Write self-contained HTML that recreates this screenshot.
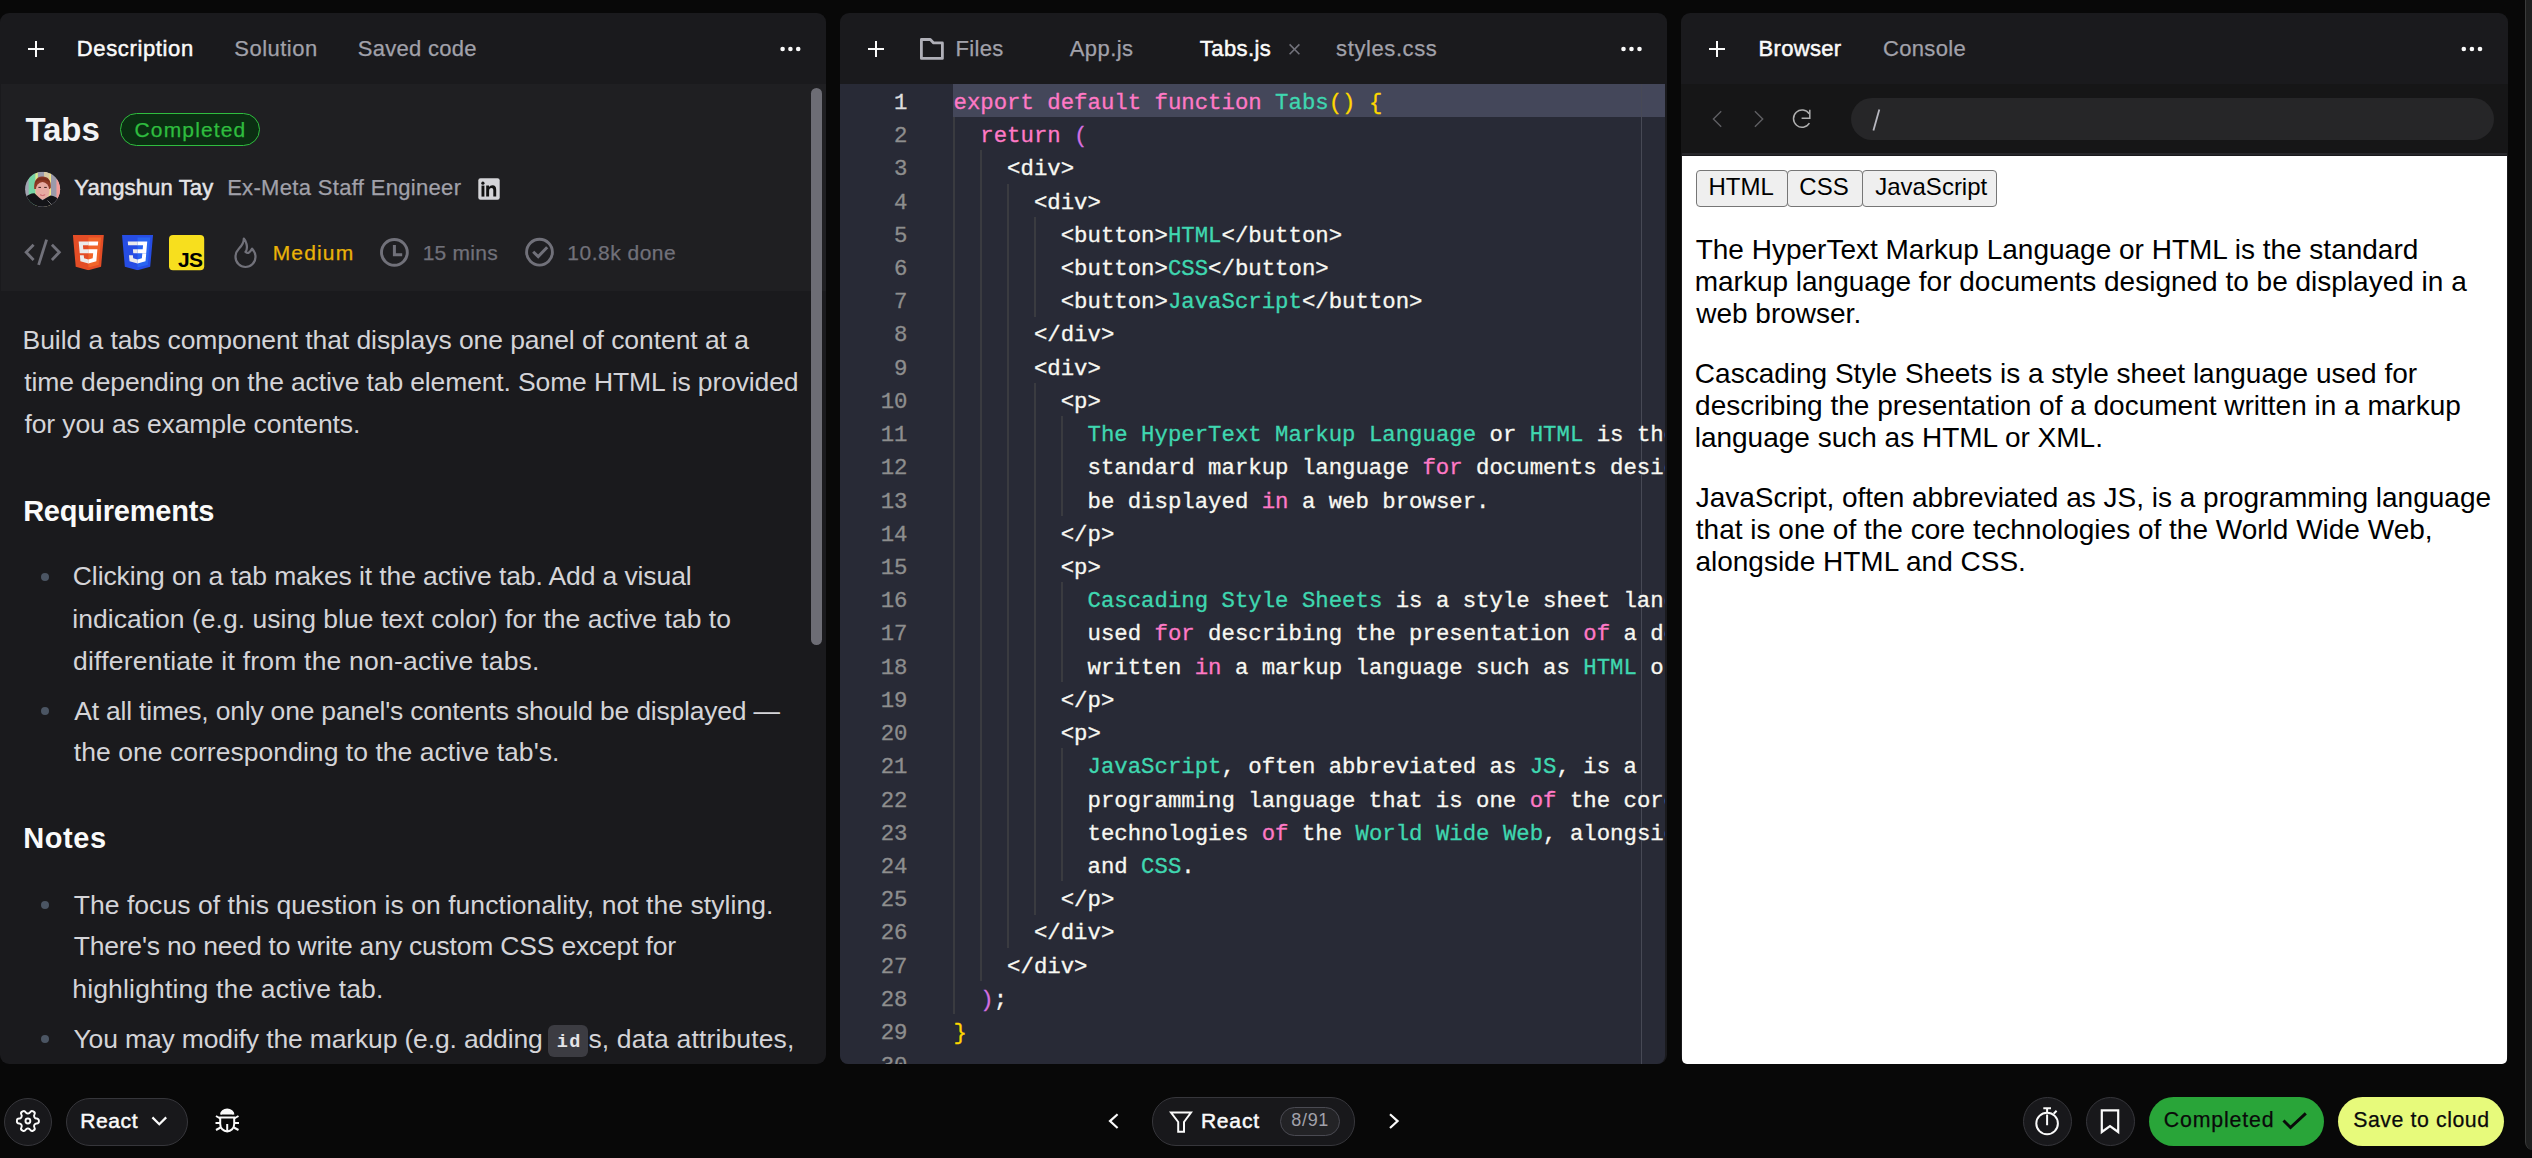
<!DOCTYPE html>
<html><head><meta charset="utf-8"><style>
html,body{margin:0;padding:0;}
body{width:2532px;height:1158px;overflow:hidden;background:#080808;position:relative;font-family:"Liberation Sans",sans-serif;}
.p{position:absolute;top:13px;height:1051px;border-radius:9px;overflow:hidden;background:#1a1a1d;}
.t{position:absolute;white-space:pre;line-height:1;font-family:"Liberation Sans",sans-serif;}
.c{position:absolute;white-space:pre;line-height:1;font-family:"Liberation Mono",monospace;font-size:22.333px;-webkit-text-stroke:0.3px currentColor;}
.a{position:absolute;}
</style></head><body>
<div class="p" style="left:0;width:826px;"></div>
<div class="a" style="left:1px;top:84px;width:825px;height:207px;background:#1f1f22"></div>
<div class="a" style="left:811px;top:88px;width:11px;height:557px;border-radius:6px;background:#6d6d75"></div>
<div class="a" style="left:548px;top:1025px;width:40px;height:32px;border-radius:6px;background:#3c3c42"></div>
<div class="p" style="left:840px;width:827px;"></div>
<div class="a" style="left:840px;top:84px;width:825px;height:980px;background:#282a36;border-radius:0 0 8px 8px;overflow:hidden">
</div>
<div class="a" style="left:0;top:0;width:2532px;height:1158px;overflow:hidden;clip-path:inset(84px 867px 94px 840px round 0 0 8px 8px)">
<div style="position:absolute;left:953px;top:84px;width:712px;height:33.22px;background:#44475a"></div>
<div style="position:absolute;left:953px;top:117.2px;width:2px;height:896.9px;background:#3a3b40"></div>
<div style="position:absolute;left:980px;top:150.4px;width:2px;height:830.5px;background:#3a3b40"></div>
<div style="position:absolute;left:1007px;top:183.7px;width:2px;height:764.1px;background:#3a3b40"></div>
<div style="position:absolute;left:1034px;top:216.9px;width:2px;height:99.7px;background:#3a3b40"></div>
<div style="position:absolute;left:1034px;top:383.0px;width:2px;height:531.5px;background:#3a3b40"></div>
<div style="position:absolute;left:1061px;top:416.2px;width:2px;height:99.7px;background:#3a3b40"></div>
<div style="position:absolute;left:1061px;top:582.3px;width:2px;height:99.7px;background:#3a3b40"></div>
<div style="position:absolute;left:1061px;top:748.4px;width:2px;height:132.9px;background:#3a3b40"></div>
<div style="position:absolute;left:1641px;top:84px;width:1px;height:980px;background:#474955"></div>
<div class="c" style="top:91.88px;left:840px;width:67.5px;text-align:right;color:#dedede">1</div>
<div class="c" style="top:91.88px;left:953.5px"><span style="color:#ff79c6">export default function </span><span style="color:#3fd7b0">Tabs</span><span style="color:#ffd700">() {</span></div>
<div class="c" style="top:125.10px;left:840px;width:67.5px;text-align:right;color:#8e8e8e">2</div>
<div class="c" style="top:125.10px;left:953.5px"><span style="color:#f8f8f2">  </span><span style="color:#ff79c6">return </span><span style="color:#d56fe0">(</span></div>
<div class="c" style="top:158.32px;left:840px;width:67.5px;text-align:right;color:#8e8e8e">3</div>
<div class="c" style="top:158.32px;left:953.5px"><span style="color:#f8f8f2">    &lt;div&gt;</span></div>
<div class="c" style="top:191.54px;left:840px;width:67.5px;text-align:right;color:#8e8e8e">4</div>
<div class="c" style="top:191.54px;left:953.5px"><span style="color:#f8f8f2">      &lt;div&gt;</span></div>
<div class="c" style="top:224.76px;left:840px;width:67.5px;text-align:right;color:#8e8e8e">5</div>
<div class="c" style="top:224.76px;left:953.5px"><span style="color:#f8f8f2">        &lt;button&gt;</span><span style="color:#3fd7b0">HTML</span><span style="color:#f8f8f2">&lt;/button&gt;</span></div>
<div class="c" style="top:257.98px;left:840px;width:67.5px;text-align:right;color:#8e8e8e">6</div>
<div class="c" style="top:257.98px;left:953.5px"><span style="color:#f8f8f2">        &lt;button&gt;</span><span style="color:#3fd7b0">CSS</span><span style="color:#f8f8f2">&lt;/button&gt;</span></div>
<div class="c" style="top:291.20px;left:840px;width:67.5px;text-align:right;color:#8e8e8e">7</div>
<div class="c" style="top:291.20px;left:953.5px"><span style="color:#f8f8f2">        &lt;button&gt;</span><span style="color:#3fd7b0">JavaScript</span><span style="color:#f8f8f2">&lt;/button&gt;</span></div>
<div class="c" style="top:324.42px;left:840px;width:67.5px;text-align:right;color:#8e8e8e">8</div>
<div class="c" style="top:324.42px;left:953.5px"><span style="color:#f8f8f2">      &lt;/div&gt;</span></div>
<div class="c" style="top:357.64px;left:840px;width:67.5px;text-align:right;color:#8e8e8e">9</div>
<div class="c" style="top:357.64px;left:953.5px"><span style="color:#f8f8f2">      &lt;div&gt;</span></div>
<div class="c" style="top:390.86px;left:840px;width:67.5px;text-align:right;color:#8e8e8e">10</div>
<div class="c" style="top:390.86px;left:953.5px"><span style="color:#f8f8f2">        &lt;p&gt;</span></div>
<div class="c" style="top:424.08px;left:840px;width:67.5px;text-align:right;color:#8e8e8e">11</div>
<div class="c" style="top:424.08px;left:953.5px"><span style="color:#f8f8f2">          </span><span style="color:#3fd7b0">The HyperText Markup Language</span><span style="color:#f8f8f2"> or </span><span style="color:#3fd7b0">HTML</span><span style="color:#f8f8f2"> is the</span></div>
<div class="c" style="top:457.30px;left:840px;width:67.5px;text-align:right;color:#8e8e8e">12</div>
<div class="c" style="top:457.30px;left:953.5px"><span style="color:#f8f8f2">          standard markup language </span><span style="color:#ff79c6">for</span><span style="color:#f8f8f2"> documents designed to</span></div>
<div class="c" style="top:490.52px;left:840px;width:67.5px;text-align:right;color:#8e8e8e">13</div>
<div class="c" style="top:490.52px;left:953.5px"><span style="color:#f8f8f2">          be displayed </span><span style="color:#ff79c6">in</span><span style="color:#f8f8f2"> a web browser.</span></div>
<div class="c" style="top:523.74px;left:840px;width:67.5px;text-align:right;color:#8e8e8e">14</div>
<div class="c" style="top:523.74px;left:953.5px"><span style="color:#f8f8f2">        &lt;/p&gt;</span></div>
<div class="c" style="top:556.96px;left:840px;width:67.5px;text-align:right;color:#8e8e8e">15</div>
<div class="c" style="top:556.96px;left:953.5px"><span style="color:#f8f8f2">        &lt;p&gt;</span></div>
<div class="c" style="top:590.18px;left:840px;width:67.5px;text-align:right;color:#8e8e8e">16</div>
<div class="c" style="top:590.18px;left:953.5px"><span style="color:#f8f8f2">          </span><span style="color:#3fd7b0">Cascading Style Sheets</span><span style="color:#f8f8f2"> is a style sheet language</span></div>
<div class="c" style="top:623.40px;left:840px;width:67.5px;text-align:right;color:#8e8e8e">17</div>
<div class="c" style="top:623.40px;left:953.5px"><span style="color:#f8f8f2">          used </span><span style="color:#ff79c6">for</span><span style="color:#f8f8f2"> describing the presentation </span><span style="color:#ff79c6">of</span><span style="color:#f8f8f2"> a document</span></div>
<div class="c" style="top:656.62px;left:840px;width:67.5px;text-align:right;color:#8e8e8e">18</div>
<div class="c" style="top:656.62px;left:953.5px"><span style="color:#f8f8f2">          written </span><span style="color:#ff79c6">in</span><span style="color:#f8f8f2"> a markup language such as </span><span style="color:#3fd7b0">HTML</span><span style="color:#f8f8f2"> or XML.</span></div>
<div class="c" style="top:689.84px;left:840px;width:67.5px;text-align:right;color:#8e8e8e">19</div>
<div class="c" style="top:689.84px;left:953.5px"><span style="color:#f8f8f2">        &lt;/p&gt;</span></div>
<div class="c" style="top:723.06px;left:840px;width:67.5px;text-align:right;color:#8e8e8e">20</div>
<div class="c" style="top:723.06px;left:953.5px"><span style="color:#f8f8f2">        &lt;p&gt;</span></div>
<div class="c" style="top:756.28px;left:840px;width:67.5px;text-align:right;color:#8e8e8e">21</div>
<div class="c" style="top:756.28px;left:953.5px"><span style="color:#f8f8f2">          </span><span style="color:#3fd7b0">JavaScript</span><span style="color:#f8f8f2">, often abbreviated as </span><span style="color:#3fd7b0">JS</span><span style="color:#f8f8f2">, is a</span></div>
<div class="c" style="top:789.50px;left:840px;width:67.5px;text-align:right;color:#8e8e8e">22</div>
<div class="c" style="top:789.50px;left:953.5px"><span style="color:#f8f8f2">          programming language that is one </span><span style="color:#ff79c6">of</span><span style="color:#f8f8f2"> the core</span></div>
<div class="c" style="top:822.72px;left:840px;width:67.5px;text-align:right;color:#8e8e8e">23</div>
<div class="c" style="top:822.72px;left:953.5px"><span style="color:#f8f8f2">          technologies </span><span style="color:#ff79c6">of</span><span style="color:#f8f8f2"> the </span><span style="color:#3fd7b0">World Wide Web</span><span style="color:#f8f8f2">, alongside HTML</span></div>
<div class="c" style="top:855.94px;left:840px;width:67.5px;text-align:right;color:#8e8e8e">24</div>
<div class="c" style="top:855.94px;left:953.5px"><span style="color:#f8f8f2">          and </span><span style="color:#3fd7b0">CSS</span><span style="color:#f8f8f2">.</span></div>
<div class="c" style="top:889.16px;left:840px;width:67.5px;text-align:right;color:#8e8e8e">25</div>
<div class="c" style="top:889.16px;left:953.5px"><span style="color:#f8f8f2">        &lt;/p&gt;</span></div>
<div class="c" style="top:922.38px;left:840px;width:67.5px;text-align:right;color:#8e8e8e">26</div>
<div class="c" style="top:922.38px;left:953.5px"><span style="color:#f8f8f2">      &lt;/div&gt;</span></div>
<div class="c" style="top:955.60px;left:840px;width:67.5px;text-align:right;color:#8e8e8e">27</div>
<div class="c" style="top:955.60px;left:953.5px"><span style="color:#f8f8f2">    &lt;/div&gt;</span></div>
<div class="c" style="top:988.82px;left:840px;width:67.5px;text-align:right;color:#8e8e8e">28</div>
<div class="c" style="top:988.82px;left:953.5px"><span style="color:#f8f8f2">  </span><span style="color:#d56fe0">)</span><span style="color:#f8f8f2">;</span></div>
<div class="c" style="top:1022.04px;left:840px;width:67.5px;text-align:right;color:#8e8e8e">29</div>
<div class="c" style="top:1022.04px;left:953.5px"><span style="color:#ffd700">}</span></div>
<div class="c" style="top:1055.26px;left:840px;width:67.5px;text-align:right;color:#8e8e8e">30</div>
<div class="c" style="top:1055.26px;left:953.5px"><span style="color:#f8f8f2"></span></div>
</div>
<div class="p" style="left:1681px;width:827px;"></div>
<div class="a" style="left:1681px;top:84px;width:827px;height:71px;background:#161617"></div>
<div class="a" style="left:1682px;top:153px;width:825px;height:2px;background:#26262a"></div>
<div class="a" style="left:1850.5px;top:98px;width:643px;height:41.5px;border-radius:21px;background:#262628"></div>
<div class="a" style="left:1682px;top:155.5px;width:825px;height:908.5px;background:#fff;border-radius:0 0 5px 5px"></div>
<div class="a" style="left:1696px;top:170px;width:91.5px;height:37px;box-sizing:border-box;border:1.5px solid #767676;border-radius:4px;background:#efefef"></div>
<div class="a" style="left:1787px;top:170px;width:75.5px;height:37px;box-sizing:border-box;border:1.5px solid #767676;border-radius:4px;background:#efefef"></div>
<div class="a" style="left:1862px;top:170px;width:135px;height:37px;box-sizing:border-box;border:1.5px solid #767676;border-radius:4px;background:#efefef"></div>
<div class="a" style="left:2525px;top:0;width:7px;height:1150px;background:#1f2020;border-left:1px solid #3a3b3b;border-bottom-left-radius:8px"></div>
<div class="a" style="left:120px;top:113px;width:140px;height:33px;box-sizing:border-box;border:1.5px solid #2fbd3f;border-radius:17px;background:#0b2e12"></div>
<div class="a" style="left:66px;top:1097.5px;width:121.8px;height:48px;box-sizing:border-box;border:1.5px solid #36363b;border-radius:24px;background:#18181b"></div>
<div class="a" style="left:3.5px;top:1097.5px;width:48px;height:48px;box-sizing:border-box;border:1.5px solid #36363b;border-radius:24px;background:#18181b"></div>
<div class="a" style="left:1152px;top:1097px;width:202.6px;height:48.5px;box-sizing:border-box;border:1.5px solid #36363b;border-radius:24px;background:#18181b"></div>
<div class="a" style="left:1280px;top:1106.5px;width:60px;height:29.5px;box-sizing:border-box;border:1.5px solid #4a4a52;border-radius:15px;background:#232326"></div>
<div class="a" style="left:2023px;top:1097px;width:48.8px;height:48.5px;box-sizing:border-box;border:1.5px solid #36363b;border-radius:25px;background:#18181b"></div>
<div class="a" style="left:2086px;top:1097px;width:48.8px;height:48.5px;box-sizing:border-box;border:1.5px solid #36363b;border-radius:25px;background:#18181b"></div>
<div class="a" style="left:2149px;top:1097px;width:174.7px;height:48.5px;border-radius:25px;background:#29a539"></div>
<div class="a" style="left:2338px;top:1097px;width:166px;height:48.5px;border-radius:25px;background:#e7fa7b"></div>
<svg class="a" style="left:0;top:0" width="2532" height="1158" viewBox="0 0 2532 1158">
<g stroke="#fafafa" stroke-width="2" fill="none">
<path d="M28 49H44M36 41V57"/>
<path d="M868 49H884M876 41V57"/>
<path d="M1709 49H1725M1717 41V57"/>
</g>
<g fill="#fafafa">
<circle cx="782.6" cy="49" r="2.3"/><circle cx="790.4" cy="49" r="2.3"/><circle cx="798.2" cy="49" r="2.3"/>
<circle cx="1623.5" cy="49" r="2.3"/><circle cx="1631.5" cy="49" r="2.3"/><circle cx="1639.5" cy="49" r="2.3"/>
<circle cx="2463.8" cy="49" r="2.3"/><circle cx="2471.9" cy="49" r="2.3"/><circle cx="2480" cy="49" r="2.3"/>
</g>
<!-- folder -->
<path d="M921.4 39.5H930.3L933.6 42.9H942.4V58.4H921.4Z" stroke="#b0b0b8" stroke-width="2.8" fill="none" stroke-linejoin="round"/>
<!-- close x -->
<path d="M1289.6 44.4L1299.4 54.2M1299.4 44.4L1289.6 54.2" stroke="#71717a" stroke-width="1.6" fill="none"/>
<!-- code icon -->
<g stroke="#71717a" stroke-width="2.8" fill="none" stroke-linejoin="miter">
<path d="M33.6 244.8L26.2 252.3L33.6 259.9"/>
<path d="M51.9 244.8L59.3 252.3L51.9 259.9"/>
<path d="M46.6 239.6L38.6 264.8"/>
</g>
<!-- html5 -->
<svg x="72.9" y="235" width="31" height="35.2" viewBox="30 0 451 512" preserveAspectRatio="none">
<path fill="#E44D26" d="M71,460 L30,0 481,0 440,460 255,512"/>
<path fill="#F16529" d="M256,472 L405,431 440,37 256,37"/>
<path fill="#EBEBEB" d="M256,208 L181,208 176,150 256,150 256,94 255,94 114,94 115,109 129,265 256,265zM256,355 L255,355 192,338 188,293 158,293 132,293 139,382 255,414 256,414z"/>
<path fill="#FFF" d="M255,208 L255,265 325,265 318,338 255,355 255,414 371,382 372,372 385,223 387,208 371,208zM255,94 L255,94 255,150 255,151 392,151 392,151 393,151 394,138 397,109 398,94z"/>
</svg>
<!-- css3 -->
<svg x="122" y="235" width="31" height="35.2" viewBox="30 0 451 512" preserveAspectRatio="none">
<path fill="#264DE4" d="M71.357 460.819L30.272 0h451.456l-41.129 460.746L255.724 512z"/>
<path fill="#2965F1" d="M256 472.818l149.324-41.397L440.45 37.319H256z"/>
<path fill="#EBEBEB" d="M256.19 93.76v56.789H118.95l-1.141-12.764-2.59-28.763-1.356-15.262zM256 208.795v56.796h-62.52l-1.138-12.764-2.592-28.768-1.354-15.264zM256.334 355.161l-.248.066-63.332-17.083-4.047-45.361h-57.092l7.966 89.301 116.461 32.353.292-.081z"/>
<path fill="#FFF" d="M256 208.778h75.245l5.174-58.229H256V93.76h141.366l-1.35 15.267-13.881 155.962H256zM326.07 262.093l-6.848 76.142-63.41 17.11v59.061l116.554-32.297.857-9.605 9.891-110.411z"/>
</svg>
<!-- js -->
<rect x="169" y="235" width="35.2" height="35.2" rx="4" fill="#F7DF1E"/>
<text x="178" y="267" font-family="Liberation Sans" font-weight="bold" font-size="21" fill="#000" letter-spacing="-0.6">JS</text>
<!-- flame (tabler) -->
<svg x="225.5" y="232" width="40" height="40" viewBox="0 0 24 24">
<path d="M12 12c2 -2.96 0 -7 -1 -8c0 3.038 -1.773 4.741 -3 6c-1.226 1.26 -2 3.24 -2 5a6 6 0 1 0 12 0c0 -1.532 -1.056 -3.94 -2 -5c-1.786 3 -2.791 3 -4 2z" stroke="#71717a" stroke-width="1.35" fill="none" stroke-linejoin="round" stroke-linecap="round"/>
</svg>
<!-- clock -->
<circle cx="394.4" cy="252.4" r="12.9" stroke="#71717a" stroke-width="2.9" fill="none"/>
<path d="M394.4 244.9V254.8H402.2" stroke="#71717a" stroke-width="3" fill="none"/>
<!-- check circle -->
<circle cx="539.5" cy="252.2" r="12.9" stroke="#71717a" stroke-width="2.9" fill="none"/>
<path d="M533.2 251.7L538.2 256.6L547.2 247.2" stroke="#71717a" stroke-width="3" fill="none"/>
<!-- linkedin -->
<rect x="478.3" y="178.3" width="21.4" height="21.4" rx="2.2" fill="#d4d4d8"/>
<g fill="#111">
<circle cx="482.9" cy="183.2" r="1.6"/>
<rect x="481.5" y="185.6" width="2.9" height="11"/>
<path d="M486.2 185.6H489V187.2C489.7 186 490.9 185.3 492.5 185.3C495.1 185.3 496.2 186.9 496.2 189.8V196.6H493.3V190.6C493.3 189 492.9 188 491.5 188C489.9 188 489.1 189.1 489.1 190.9V196.6H486.2Z"/>
</g>
<!-- avatar -->
<defs><clipPath id="av"><circle cx="42.6" cy="189.3" r="17.5"/></clipPath></defs>
<g clip-path="url(#av)">
<rect x="25" y="171.8" width="36" height="36" fill="#a3a3b2"/>
<rect x="28.7" y="171.8" width="6.7" height="36" fill="#74d3a4"/>
<rect x="35.4" y="171.8" width="2.5" height="36" fill="#d6ee8c"/>
<rect x="37.9" y="171.8" width="6.1" height="36" fill="#9c9cac"/>
<rect x="44" y="171.8" width="5.2" height="36" fill="#d8c9a4"/>
<rect x="49.2" y="171.8" width="1.8" height="36" fill="#f3e38a"/>
<rect x="51" y="171.8" width="5.5" height="36" fill="#9a9aaa"/>
<rect x="56.5" y="171.8" width="4.5" height="36" fill="#f39c98"/>
<path d="M34.2 189C33.6 182 36 176.6 42 176.4C48 176.2 51.3 180 50.8 188L49.5 189H35Z" fill="#8f3a26"/>
<ellipse cx="42.5" cy="190.8" rx="6.9" ry="8.8" fill="#e6aaa2"/>
<path d="M35.4 185.5C35.6 181.5 38 179.8 41.5 180.2C44.5 180.6 47.5 180 49.8 182.5C49.5 180 47 177.6 42.3 177.6C37.5 177.6 35 180.5 35.4 185.5Z" fill="#7a2e1c"/>
<path d="M38.4 187.4H41M44.2 187.4H46.8" stroke="#3a2020" stroke-width="1"/>
<path d="M40 194.8Q42.6 196.2 45.2 194.8" stroke="#c8606a" stroke-width="1" fill="none"/>
<path d="M24 199C27 195 31 193 34.5 193.2L39 197.5L42.5 200.3L46 198L50.5 195.5C54 195.8 58 198 61 201V212H24Z" fill="#141418"/>
<path d="M47.5 200.5L52 205" stroke="#8a8a90" stroke-width="0.8"/>
</g>
<!-- browser toolbar -->
<path d="M1721.2 111.2L1713.4 119L1721.2 126.8" stroke="#5f5f63" stroke-width="1.4" fill="none"/>
<path d="M1754.9 111.2L1762.7 119L1754.9 126.8" stroke="#5f5f63" stroke-width="1.4" fill="none"/>
<path d="M1809.2 113.8A8.6 8.6 0 1 0 1809.4 123.2" stroke="#b0b0b0" stroke-width="1.5" fill="none"/>
<path d="M1809.8 109.8V118.3H1801.6" stroke="#b0b0b0" stroke-width="1.5" fill="none"/>
<path d="M1879.3 109.6L1873.4 130.6" stroke="#b8b8c0" stroke-width="1.8" fill="none"/>
<!-- bottom: gear -->
<svg x="14.7" y="1107.8" width="26.4" height="26.4" viewBox="0 0 24 24">
<g transform="rotate(90 12 12)" stroke="#fafafa" stroke-width="1.75" fill="none" stroke-linejoin="round" stroke-linecap="round">
<path d="M12.22 2h-.44a2 2 0 0 0-2 2v.18a2 2 0 0 1-1 1.73l-.43.25a2 2 0 0 1-2 0l-.15-.08a2 2 0 0 0-2.730.73l-.22.38a2 2 0 0 0 .73 2.73l.15.1a2 2 0 0 1 1 1.72v.51a2 2 0 0 1-1 1.74l-.15.09a2 2 0 0 0-.73 2.730l.22.38a2 2 0 0 0 2.73.73l.15-.08a2 2 0 0 1 2 0l.43.25a2 2 0 0 1 1 1.73V20a2 2 0 0 0 2 2h.44a2 2 0 0 0 2-2v-.18a2 2 0 0 1 1-1.73l.43-.25a2 2 0 0 1 2 0l.15.08a2 2 0 0 0 2.73-.73l.22-.39a2 2 0 0 0-.73-2.73l-.15-.08a2 2 0 0 1-1-1.74v-.5a2 2 0 0 1 1-1.74l.15-.09a2 2 0 0 0 .73-2.73l-.22-.38a2 2 0 0 0-2.73-.73l-.15.08a2 2 0 0 1-2 0l-.43-.25a2 2 0 0 1-1-1.73V4a2 2 0 0 0-2-2z"/>
<circle cx="12" cy="12" r="2.2"/>
</g>
</svg>
<path d="M152.4 1117.4L159.3 1124.3L166.2 1117.4" stroke="#fafafa" stroke-width="2.2" fill="none"/>
<!-- bug -->
<g stroke="#fafafa" stroke-width="2" fill="none">
<path d="M221 1114.5A6.2 5 0 0 1 233.4 1114.5" fill="#fafafa"/>
<path d="M220.2 1117.5H234.2V1124C234.2 1128.2 231 1131.4 227.2 1131.4C223.4 1131.4 220.2 1128.2 220.2 1124Z"/>
<path d="M227.2 1124V1131M215.5 1123H220.2M234.2 1123H239M216 1116L220.2 1118.5M238.5 1116L234.2 1118.5M216 1130L220.6 1127.5M238.5 1130L233.8 1127.5"/>
</g>
<!-- center nav -->
<path d="M1117.6 1114.2L1110 1121.1L1117.6 1128" stroke="#fafafa" stroke-width="2.2" fill="none"/>
<path d="M1390 1114.2L1397.6 1121.1L1390 1128" stroke="#fafafa" stroke-width="2.2" fill="none"/>
<path d="M1171 1112.5H1191L1184 1122V1131.8H1178.2V1122Z" stroke="#fafafa" stroke-width="2" fill="none" stroke-linejoin="miter"/>
<!-- stopwatch -->
<g stroke="#fafafa" stroke-width="2" fill="none">
<circle cx="2047.1" cy="1123.5" r="10.8"/>
<path d="M2043.3 1108.2H2051M2047.1 1108.2V1112.7M2047.1 1114.5V1125.2M2053.7 1113.7L2056.6 1110.8"/>
</g>
<path d="M2101.8 1110.3H2118.2V1132L2110 1126.2L2101.8 1132Z" stroke="#fafafa" stroke-width="2.2" fill="none"/>
<path d="M2283.5 1120.5L2290.5 1127.5L2305.8 1113.4" stroke="#0a0a0a" stroke-width="3" fill="none"/>
<g fill="#4b5563"><circle cx="45" cy="576.9" r="4"/><circle cx="45" cy="711.1" r="4"/><circle cx="45" cy="905.1" r="4"/><circle cx="45" cy="1039.1" r="4"/></g>
</svg>

<div class="t" style="left:76.75px;top:37.68px;font-size:22px;color:#fafafa;letter-spacing:0.636px;-webkit-text-stroke:0.5px currentColor;">Description</div>
<div class="t" style="left:234.36px;top:37.68px;font-size:22px;color:#a1a1aa;letter-spacing:0.469px;-webkit-text-stroke:0.25px currentColor;">Solution</div>
<div class="t" style="left:357.86px;top:37.68px;font-size:22px;color:#a1a1aa;letter-spacing:0.276px;-webkit-text-stroke:0.25px currentColor;">Saved code</div>
<div class="t" style="left:25.42px;top:113.07px;font-size:33px;color:#f4f4f5;font-weight:bold;letter-spacing:-0.082px;">Tabs</div>
<div class="t" style="left:134.56px;top:118.92px;font-size:21px;color:#2fbd3f;letter-spacing:1.143px;-webkit-text-stroke:0.25px currentColor;">Completed</div>
<div class="t" style="left:74.27px;top:177.48px;font-size:22px;color:#e4e4e7;letter-spacing:0.143px;-webkit-text-stroke:0.5px currentColor;">Yangshun Tay</div>
<div class="t" style="left:227.13px;top:177.48px;font-size:22px;color:#a1a1aa;letter-spacing:0.323px;-webkit-text-stroke:0.25px currentColor;">Ex-Meta Staff Engineer</div>
<div class="t" style="left:272.66px;top:241.72px;font-size:21px;color:#eab308;letter-spacing:1.155px;-webkit-text-stroke:0.25px currentColor;">Medium</div>
<div class="t" style="left:422.64px;top:242.02px;font-size:21px;color:#71717a;letter-spacing:0.249px;-webkit-text-stroke:0.25px currentColor;">15 mins</div>
<div class="t" style="left:567.34px;top:242.02px;font-size:21px;color:#71717a;letter-spacing:0.488px;-webkit-text-stroke:0.25px currentColor;">10.8k done</div>
<div class="t" style="left:22.57px;top:326.87px;font-size:26.5px;color:#d4d4d8;letter-spacing:-0.072px;">Build a tabs component that displays one panel of content at a</div>
<div class="t" style="left:24.37px;top:368.57px;font-size:26.5px;color:#d4d4d8;letter-spacing:-0.137px;">time depending on the active tab element. Some HTML is provided</div>
<div class="t" style="left:24.42px;top:410.57px;font-size:26.5px;color:#d4d4d8;letter-spacing:-0.108px;">for you as example contents.</div>
<div class="t" style="left:23.13px;top:497.45px;font-size:29px;color:#fafafa;font-weight:bold;letter-spacing:-0.202px;">Requirements</div>
<div class="t" style="left:72.82px;top:563.37px;font-size:26.5px;color:#d4d4d8;letter-spacing:-0.106px;">Clicking on a tab makes it the active tab. Add a visual</div>
<div class="t" style="left:72.29px;top:605.57px;font-size:26.5px;color:#d4d4d8;letter-spacing:0.028px;">indication (e.g. using blue text color) for the active tab to</div>
<div class="t" style="left:73.02px;top:647.57px;font-size:26.5px;color:#d4d4d8;letter-spacing:0.214px;">differentiate it from the non-active tabs.</div>
<div class="t" style="left:74.20px;top:697.57px;font-size:26.5px;color:#d4d4d8;letter-spacing:-0.204px;">At all times, only one panel&#x27;s contents should be displayed —</div>
<div class="t" style="left:73.77px;top:738.87px;font-size:26.5px;color:#d4d4d8;letter-spacing:0.044px;">the one corresponding to the active tab&#x27;s.</div>
<div class="t" style="left:23.13px;top:824.45px;font-size:29px;color:#fafafa;font-weight:bold;letter-spacing:0.593px;">Notes</div>
<div class="t" style="left:73.66px;top:891.57px;font-size:26.5px;color:#d4d4d8;letter-spacing:0.055px;">The focus of this question is on functionality, not the styling.</div>
<div class="t" style="left:73.66px;top:933.27px;font-size:26.5px;color:#d4d4d8;letter-spacing:-0.195px;">There&#x27;s no need to write any custom CSS except for</div>
<div class="t" style="left:72.24px;top:976.27px;font-size:26.5px;color:#d4d4d8;letter-spacing:0.175px;">highlighting the active tab.</div>
<div class="t" style="left:73.51px;top:1025.57px;font-size:26.5px;color:#d4d4d8;letter-spacing:-0.150px;">You may modify the markup (e.g. adding</div>
<div class="t" style="left:588.38px;top:1025.57px;font-size:26.5px;color:#d4d4d8;letter-spacing:0.151px;">s, data attributes,</div>
<div class="t" style="left:556.72px;top:1033.62px;font-size:18.5px;color:#e4e4e7;font-weight:bold;font-family:'Liberation Mono',monospace;letter-spacing:1.432px;">id</div>
<div class="t" style="left:955.53px;top:37.68px;font-size:22px;color:#a1a1aa;letter-spacing:0.327px;-webkit-text-stroke:0.25px currentColor;">Files</div>
<div class="t" style="left:1069.77px;top:37.68px;font-size:22px;color:#a1a1aa;letter-spacing:0.417px;-webkit-text-stroke:0.25px currentColor;">App.js</div>
<div class="t" style="left:1199.86px;top:37.68px;font-size:22px;color:#fafafa;letter-spacing:0.410px;-webkit-text-stroke:0.5px currentColor;">Tabs.js</div>
<div class="t" style="left:1336.09px;top:37.68px;font-size:22px;color:#a1a1aa;letter-spacing:0.594px;-webkit-text-stroke:0.25px currentColor;">styles.css</div>
<div class="t" style="left:1758.55px;top:37.68px;font-size:22px;color:#fafafa;letter-spacing:0.327px;-webkit-text-stroke:0.5px currentColor;">Browser</div>
<div class="t" style="left:1882.93px;top:37.68px;font-size:22px;color:#a1a1aa;letter-spacing:0.345px;-webkit-text-stroke:0.25px currentColor;">Console</div>
<div class="t" style="left:1708.45px;top:175.38px;font-size:24px;color:#000;">HTML</div>
<div class="t" style="left:1799.35px;top:175.38px;font-size:24px;color:#000;">CSS</div>
<div class="t" style="left:1875.18px;top:175.38px;font-size:24px;color:#000;">JavaScript</div>
<div class="t" style="left:1695.68px;top:236.30px;font-size:28px;color:#000;">The HyperText Markup Language or HTML is the standard</div>
<div class="t" style="left:1694.68px;top:268.30px;font-size:28px;color:#000;">markup language for documents designed to be displayed in a</div>
<div class="t" style="left:1696.21px;top:300.30px;font-size:28px;color:#000;">web browser.</div>
<div class="t" style="left:1694.85px;top:359.80px;font-size:28px;color:#000;">Cascading Style Sheets is a style sheet language used for</div>
<div class="t" style="left:1695.07px;top:391.80px;font-size:28px;color:#000;">describing the presentation of a document written in a markup</div>
<div class="t" style="left:1694.68px;top:423.80px;font-size:28px;color:#000;">language such as HTML or XML.</div>
<div class="t" style="left:1695.70px;top:484.30px;font-size:28px;color:#000;">JavaScript, often abbreviated as JS, is a programming language</div>
<div class="t" style="left:1695.85px;top:516.30px;font-size:28px;color:#000;">that is one of the core technologies of the World Wide Web,</div>
<div class="t" style="left:1695.38px;top:548.30px;font-size:28px;color:#000;">alongside HTML and CSS.</div>
<div class="t" style="left:80.28px;top:1110.02px;font-size:21px;color:#fafafa;letter-spacing:0.586px;-webkit-text-stroke:0.5px currentColor;">React</div>
<div class="t" style="left:1200.88px;top:1110.42px;font-size:21px;color:#fafafa;letter-spacing:0.826px;-webkit-text-stroke:0.5px currentColor;">React</div>
<div class="t" style="left:1291.36px;top:1111.46px;font-size:18px;color:#a1a1aa;letter-spacing:0.653px;">8/91</div>
<div class="t" style="left:2163.74px;top:1109.77px;font-size:21.3px;color:#0a0a0a;letter-spacing:0.863px;-webkit-text-stroke:0.25px currentColor;">Completed</div>
<div class="t" style="left:2353.14px;top:1109.77px;font-size:21.3px;color:#0a0a0a;letter-spacing:0.580px;-webkit-text-stroke:0.25px currentColor;">Save to cloud</div>
</body></html>
